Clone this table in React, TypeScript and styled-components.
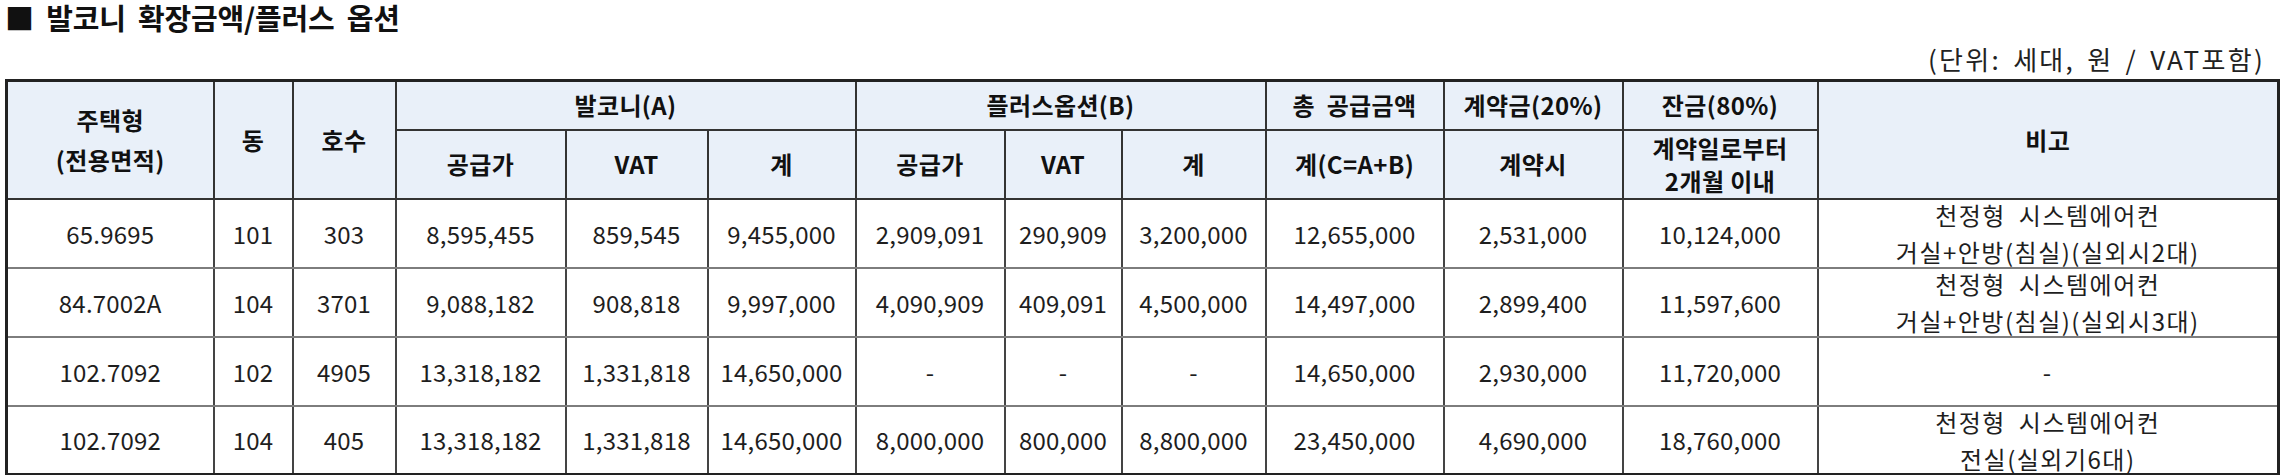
import React from "react"
import styled, { createGlobalStyle } from "styled-components"

const GlobalStyle = createGlobalStyle`
  body {
    margin: 0;
    background: #fff;
    font-family: "Noto Sans CJK KR", "Noto Sans", sans-serif;
    color: #111;
  }
`

const Page = styled.div`
  width: 2282px;
  padding: 0 5px;
  box-sizing: border-box;
`

const Title = styled.h2`
  margin: 0;
  height: 36px;
  line-height: 34px;
  font-size: 29px;
  font-weight: 700;
  color: #111;
  letter-spacing: -0.2px;
  word-spacing: 6px;
`

const UnitNote = styled.div`
  height: 43px;
  line-height: 46px;
  text-align: right;
  padding-right: 12px;
  font-size: 26px;
  font-weight: 400;
  color: #222;
  letter-spacing: 2.3px;
  word-spacing: 4px;
`

const Table = styled.table`
  width: 2272px;
  table-layout: fixed;
  border-collapse: collapse;
  border: 3px solid #222;
`

const HeadCell = styled.th<{ $pitch?: number }>`
  background: #e9f0f9;
  border: 2px solid #333;
  font-size: 24px;
  font-weight: 700;
  color: #111;
  padding: 0;
  text-align: center;
  vertical-align: middle;
  line-height: ${(p) => p.$pitch ?? 34}px;
  letter-spacing: 0.4px;
  white-space: nowrap;
`

const BodyCell = styled.td`
  border-left: 2px solid #444;
  border-right: 2px solid #444;
  border-top: 2px solid #7d7d7d;
  border-bottom: 2px solid #7d7d7d;
  font-size: 24px;
  font-weight: 400;
  color: #1e1e1e;
  padding: 0;
  text-align: center;
  vertical-align: middle;
  white-space: nowrap;
  letter-spacing: 0.2px;
`

const NoteBox = styled.div`
  height: 66px;
  display: flex;
  flex-direction: column;
  justify-content: center;
  line-height: 37px;
  font-size: 24px;
  letter-spacing: 1.5px;
  word-spacing: 6px;
`

const HeadRow = styled.tr<{ $h: number }>`
  height: ${(p) => p.$h}px;
`

const BodyRow = styled.tr`
  height: 69px;
`

const colWidths = [207, 79, 103, 170, 142, 148, 149, 117, 144, 178, 179, 195, 461]

type Row = {
  type: string
  dong: string
  ho: string
  a: [string, string, string]
  b: [string, string, string]
  total: string
  deposit: string
  balance: string
  note: string[]
}

const rows: Row[] = [
  {
    type: "65.9695",
    dong: "101",
    ho: "303",
    a: ["8,595,455", "859,545", "9,455,000"],
    b: ["2,909,091", "290,909", "3,200,000"],
    total: "12,655,000",
    deposit: "2,531,000",
    balance: "10,124,000",
    note: ["천정형 시스템에어컨", "거실+안방(침실)(실외시2대)"],
  },
  {
    type: "84.7002A",
    dong: "104",
    ho: "3701",
    a: ["9,088,182", "908,818", "9,997,000"],
    b: ["4,090,909", "409,091", "4,500,000"],
    total: "14,497,000",
    deposit: "2,899,400",
    balance: "11,597,600",
    note: ["천정형 시스템에어컨", "거실+안방(침실)(실외시3대)"],
  },
  {
    type: "102.7092",
    dong: "102",
    ho: "4905",
    a: ["13,318,182", "1,331,818", "14,650,000"],
    b: ["-", "-", "-"],
    total: "14,650,000",
    deposit: "2,930,000",
    balance: "11,720,000",
    note: ["-"],
  },
  {
    type: "102.7092",
    dong: "104",
    ho: "405",
    a: ["13,318,182", "1,331,818", "14,650,000"],
    b: ["8,000,000", "800,000", "8,800,000"],
    total: "23,450,000",
    deposit: "4,690,000",
    balance: "18,760,000",
    note: ["천정형 시스템에어컨", "전실(실외기6대)"],
  },
]

export default function App() {
  return (
    <Page>
      <GlobalStyle />
      <Title>■ 발코니 확장금액/플러스 옵션</Title>
      <UnitNote>(단위: 세대, 원 / VAT포함)</UnitNote>
      <Table>
        <colgroup>
          {colWidths.map((w, i) => (
            <col key={i} style={{ width: w }} />
          ))}
        </colgroup>
        <thead>
          <HeadRow $h={49}>
            <HeadCell rowSpan={2} $pitch={40}>
              주택형
              <br />
              (전용면적)
            </HeadCell>
            <HeadCell rowSpan={2}>동</HeadCell>
            <HeadCell rowSpan={2}>호수</HeadCell>
            <HeadCell colSpan={3}>발코니(A)</HeadCell>
            <HeadCell colSpan={3}>플러스옵션(B)</HeadCell>
            <HeadCell>총&nbsp; 공급금액</HeadCell>
            <HeadCell>계약금(20%)</HeadCell>
            <HeadCell>잔금(80%)</HeadCell>
            <HeadCell rowSpan={2}>비고</HeadCell>
          </HeadRow>
          <HeadRow $h={69}>
            <HeadCell>공급가</HeadCell>
            <HeadCell>VAT</HeadCell>
            <HeadCell>계</HeadCell>
            <HeadCell>공급가</HeadCell>
            <HeadCell>VAT</HeadCell>
            <HeadCell>계</HeadCell>
            <HeadCell>계(C=A+B)</HeadCell>
            <HeadCell>계약시</HeadCell>
            <HeadCell $pitch={33}>
              계약일로부터
              <br />
              2개월 이내
            </HeadCell>
          </HeadRow>
        </thead>
        <tbody>
          {rows.map((r, i) => (
            <BodyRow key={i}>
              <BodyCell>{r.type}</BodyCell>
              <BodyCell>{r.dong}</BodyCell>
              <BodyCell>{r.ho}</BodyCell>
              {r.a.map((v, j) => (
                <BodyCell key={"a" + j}>{v}</BodyCell>
              ))}
              {r.b.map((v, j) => (
                <BodyCell key={"b" + j}>{v}</BodyCell>
              ))}
              <BodyCell>{r.total}</BodyCell>
              <BodyCell>{r.deposit}</BodyCell>
              <BodyCell>{r.balance}</BodyCell>
              <BodyCell>
                <NoteBox>
                  {r.note.map((line, k) => (
                    <div key={k}>{line}</div>
                  ))}
                </NoteBox>
              </BodyCell>
            </BodyRow>
          ))}
        </tbody>
      </Table>
    </Page>
  )
}
